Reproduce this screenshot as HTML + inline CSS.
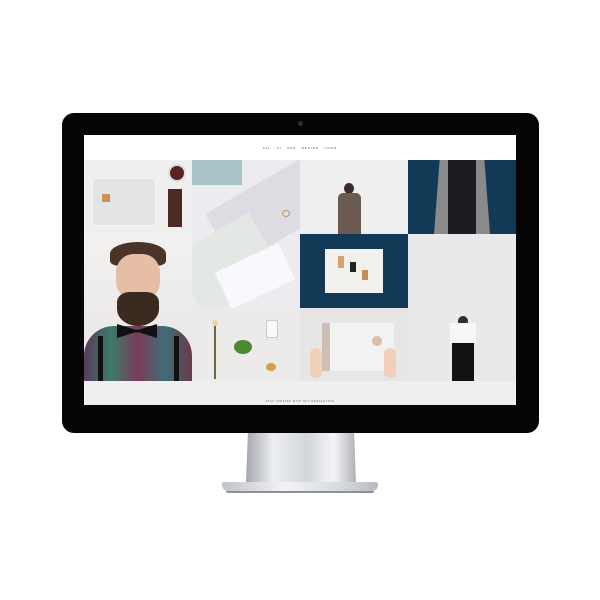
<!DOCTYPE html>
<html><head><style>
html,body{margin:0;padding:0;background:#fff;width:600px;height:600px;overflow:hidden;font-family:"Liberation Sans",sans-serif}
.a{position:absolute}
</style></head><body>
<!-- stand -->
<div class="a" style="left:246px;top:430px;width:110px;height:52px;background:linear-gradient(90deg,#a4a7ac,#eceef1 25%,#d3d6da 55%,#f4f5f7 80%,#aeb1b6);clip-path:polygon(2px 0,108px 0,110px 100%,0 100%)"></div>
<div class="a" style="left:222px;top:482px;width:156px;height:9px;background:linear-gradient(90deg,#c0c3c8,#f2f3f5 40%,#dcdfe2 70%,#b8bbc0);border-radius:2px 2px 6px 6px"></div>
<div class="a" style="left:226px;top:491px;width:148px;height:2px;background:#8e9196;border-radius:0 0 4px 4px"></div>
<!-- body -->
<div class="a" style="left:62px;top:113px;width:477px;height:320px;background:#050505;border-radius:12px"></div>
<div class="a" style="left:298px;top:121px;width:5px;height:5px;background:#2a2a44;border-radius:50%"></div>
<!-- screen -->
<div class="a" style="left:84px;top:135px;width:432px;height:270px;background:#fff;overflow:hidden">
 <div class="a" style="left:0;top:11px;width:432px;text-align:center;font-size:3px;letter-spacing:1px;color:#444">ALL&nbsp;&nbsp;&nbsp;UI&nbsp;&nbsp;&nbsp;APP&nbsp;&nbsp;&nbsp;DESIGN&nbsp;&nbsp;&nbsp;LOGO</div>
 <!-- col1 -->
 <div class="a" style="left:0;top:25px;width:108px;height:74px;background:#efefef">
  <div class="a" style="left:8px;top:18px;width:62px;height:46px;background:#e3e4e6;border:1px solid #f7f7f7"></div>
  <div class="a" style="left:18px;top:34px;width:8px;height:8px;background:#c9935a"></div>
  <div class="a" style="left:84px;top:4px;width:14px;height:14px;background:#5a2222;border-radius:50%;border:2px solid #ddd"></div>
  <div class="a" style="left:84px;top:29px;width:14px;height:38px;background:#4a2a22"></div>
 </div>
 <div class="a" style="left:0;top:99px;width:108px;height:147px;background:linear-gradient(#f2f1f0,#e9e6e4)">
  <div class="a" style="left:26px;top:8px;width:56px;height:24px;background:#4a3427;border-radius:50% 50% 20% 20%"></div>
  <div class="a" style="left:32px;top:20px;width:44px;height:46px;background:#e6bda5;border-radius:40%"></div>
  <div class="a" style="left:33px;top:58px;width:42px;height:34px;background:#3a2a20;border-radius:30% 30% 50% 50%"></div>
  <div class="a" style="left:0;top:92px;width:108px;height:55px;background:linear-gradient(90deg,#5a3a5a,#3d7a6a,#7a3b58,#3e6e78,#6a3a4a);border-radius:30px 30px 0 0"></div>
  <div class="a" style="left:33px;top:90px;width:40px;height:14px;background:#111;clip-path:polygon(0 0,45% 40%,55% 40%,100% 0,100% 100%,55% 60%,45% 60%,0 100%)"></div>
  <div class="a" style="left:14px;top:102px;width:5px;height:45px;background:#111"></div>
  <div class="a" style="left:90px;top:102px;width:5px;height:45px;background:#111"></div>
 </div>
 <!-- col2 -->
 <div class="a" style="left:108px;top:25px;width:108px;height:148px;background:#ececf0;overflow:hidden">
  <div class="a" style="left:0;top:0;width:50px;height:25px;background:#a9c4c8"></div>
  <div class="a" style="left:20px;top:20px;width:120px;height:60px;background:#dcdce2;transform:rotate(-30deg)"></div>
  <div class="a" style="left:-10px;top:70px;width:90px;height:70px;background:#e4e8e4;transform:rotate(-30deg)"></div>
  <div class="a" style="left:28px;top:96px;width:70px;height:40px;background:#f9f9fd;transform:rotate(-25deg)"></div>
  <div class="a" style="left:90px;top:50px;width:6px;height:5px;border:1px solid #b89a5a;border-radius:50%"></div>
 </div>
 <div class="a" style="left:108px;top:173px;width:108px;height:73px;background:#ecebea">
  <div class="a" style="left:22px;top:16px;width:2px;height:55px;background:#6a6a40"></div>
  <div class="a" style="left:20px;top:12px;width:6px;height:6px;background:#e8d6a8;border-radius:50%"></div>
  <div class="a" style="left:42px;top:32px;width:18px;height:14px;background:#4a8a30;border-radius:50%"></div>
  <div class="a" style="left:74px;top:12px;width:10px;height:16px;background:#f8f8f8;border:1px solid #ccc"></div>
  <div class="a" style="left:74px;top:55px;width:10px;height:8px;background:#d8a040;border-radius:50%"></div>
 </div>
 <!-- col3 -->
 <div class="a" style="left:216px;top:25px;width:108px;height:74px;background:#efefef">
  <div class="a" style="left:44px;top:23px;width:10px;height:11px;background:#3a2e28;border-radius:50%"></div>
  <div class="a" style="left:38px;top:33px;width:23px;height:41px;background:#6a5a50;border-radius:5px 5px 0 0"></div>
 </div>
 <div class="a" style="left:216px;top:99px;width:108px;height:74px;background:#123a56">
  <div class="a" style="left:25px;top:15px;width:58px;height:44px;background:#f3f1ee"></div>
  <div class="a" style="left:38px;top:22px;width:6px;height:12px;background:#d9a26a"></div>
  <div class="a" style="left:50px;top:28px;width:6px;height:10px;background:#222"></div>
  <div class="a" style="left:62px;top:36px;width:6px;height:10px;background:#c98e55"></div>
 </div>
 <div class="a" style="left:216px;top:173px;width:108px;height:73px;background:#e6e6e6">
  <div class="a" style="left:22px;top:15px;width:64px;height:48px;background:#f2f2f0;border-left:8px solid #ccbfb5"></div>
  <div class="a" style="left:72px;top:28px;width:10px;height:10px;background:#d8c0a8;border-radius:50%"></div>
  <div class="a" style="left:10px;top:40px;width:12px;height:30px;background:#f1cfb8;border-radius:6px"></div>
  <div class="a" style="left:84px;top:40px;width:12px;height:30px;background:#f1cfb8;border-radius:6px"></div>
 </div>
 <!-- col4 -->
 <div class="a" style="left:324px;top:25px;width:108px;height:74px;background:#123a56">
  <div class="a" style="left:26px;top:0;width:56px;height:74px;background:#8a8a8a;clip-path:polygon(10% 0,90% 0,100% 100%,0 100%)"></div>
  <div class="a" style="left:40px;top:0;width:28px;height:74px;background:#1c1c22"></div>
 </div>
 <div class="a" style="left:324px;top:99px;width:108px;height:147px;background:#e9e9eb">
  <div class="a" style="left:50px;top:82px;width:10px;height:10px;background:#3a2a22;border-radius:50%"></div>
  <div class="a" style="left:42px;top:89px;width:26px;height:20px;background:#f7f7f7"></div>
  <div class="a" style="left:44px;top:109px;width:22px;height:38px;background:#111"></div>
 </div>
 <!-- footer -->
 <div class="a" style="left:0;top:246px;width:432px;height:24px;background:#efefef"></div>
 <div class="a" style="left:0;top:265px;width:432px;text-align:center;font-size:2.5px;letter-spacing:.6px;color:#666">STAY UPDATED WITH OUT NEWSLETTER</div>
</div>
</body></html>
